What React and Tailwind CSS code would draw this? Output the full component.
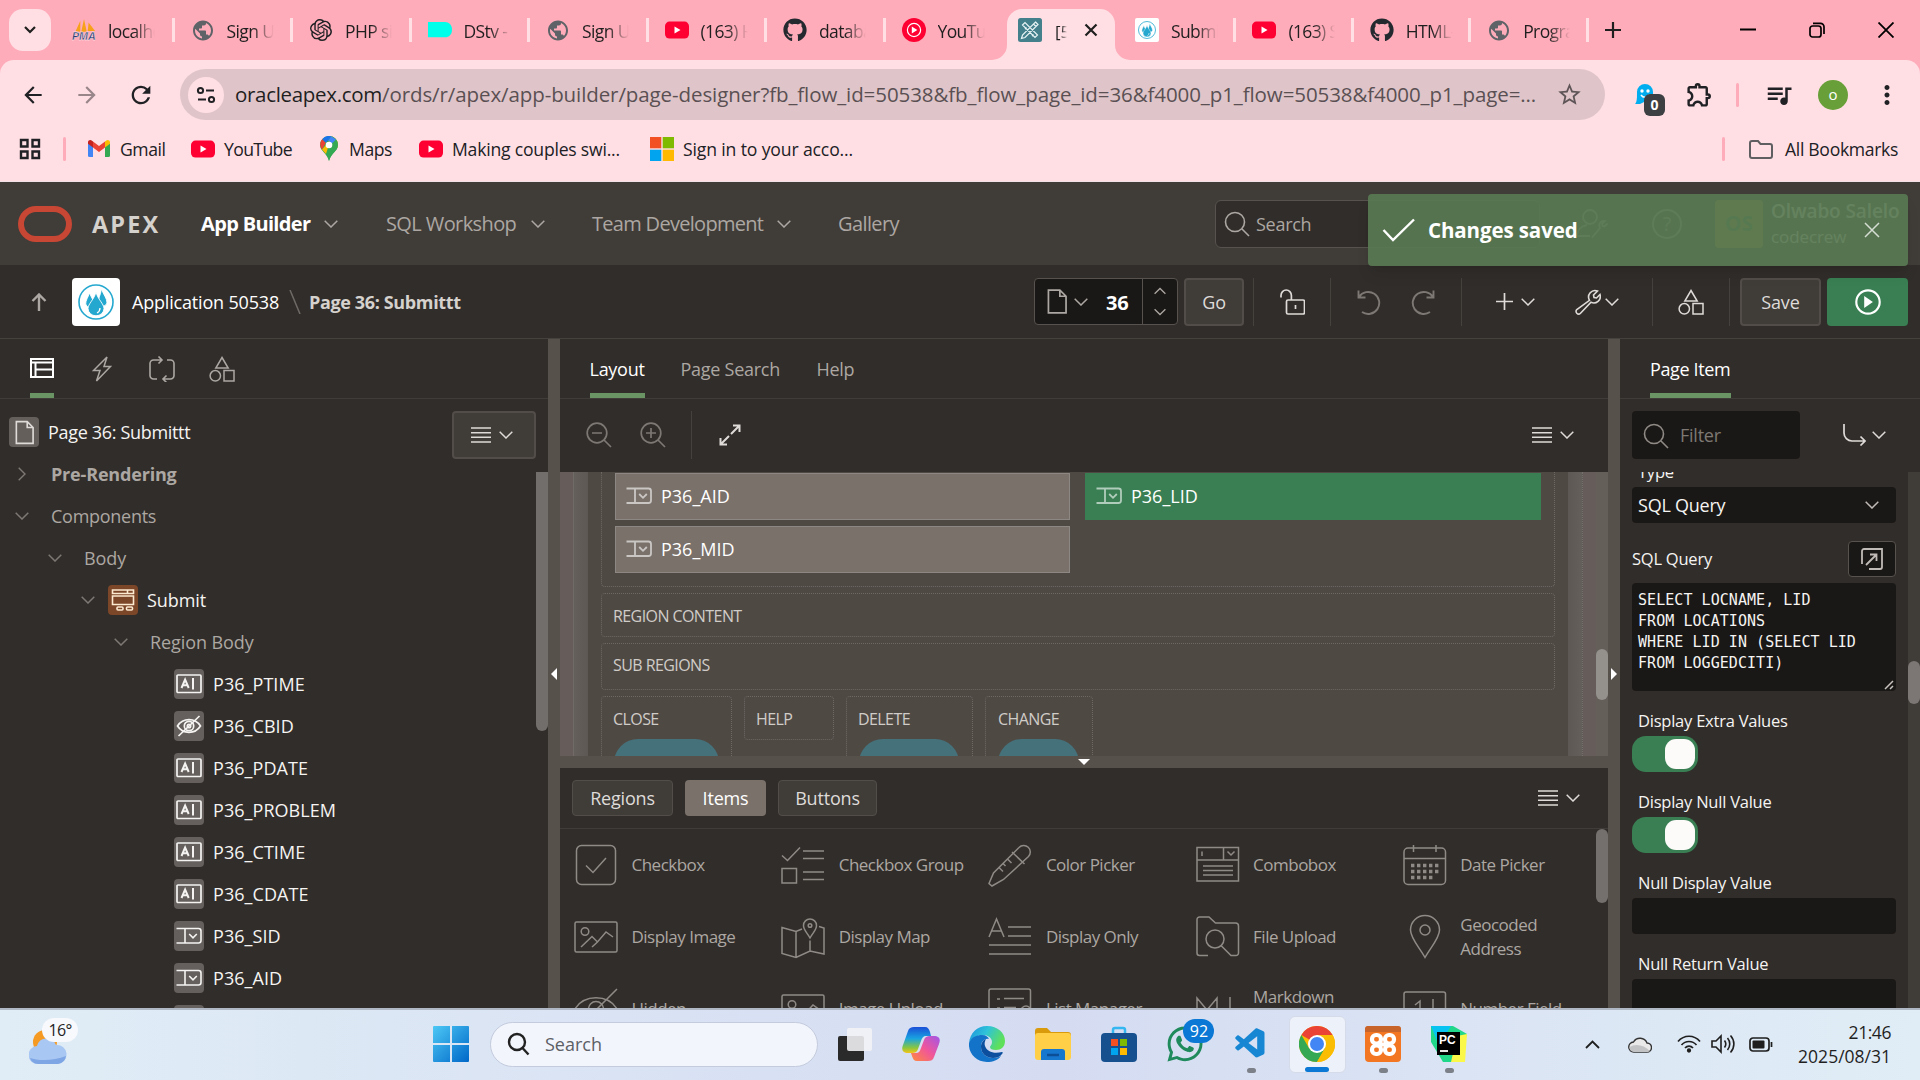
import React from "react";
import { MdPublic, MdArrowBack, MdArrowForward, MdRefresh, MdQueueMusic, MdOutlineExtension, MdStarOutline, MdMoreVert } from "react-icons/md";
import { FaGithub, FaWhatsapp } from "react-icons/fa";
import { SiOpenai } from "react-icons/si";
import { VscVscode } from "react-icons/vsc";

const Svg = ({ w = 24, h = w, vb = "0 0 24 24", sw = 1.5, className = "", children }) => (
  <svg width={w} height={h} viewBox={vb} fill="none" stroke="currentColor" strokeWidth={sw} className={"shrink-0 " + className}>
    {children}
  </svg>
);

/* ---------- shared icons ---------- */
const Chevron = ({ className = "", w = 14 }) => (
  <Svg w={w} h={8} vb="0 0 14 8" className={className}><path d="M.7.7 7 7l6.3-6.3" /></Svg>
);
const ChevronRight = () => <Svg w={8} h={14} vb="0 0 8 14" sw={1.4}><path d="M.7.7 7 7 .7 13.3" /></Svg>;
const Lines = () => (
  <Svg w={20} h={16} vb="0 0 20 16" sw={1.5}><path d="M0 1h20M0 5.7h20M0 10.3h20M0 15h20" /></Svg>
);
const MenuIcon = () => (
  <div className="flex items-center gap-2 text-[#dedbd8]"><Lines /><Chevron /></div>
);
const SearchIcon = ({ className = "" }) => (
  <Svg w={26} h={26} vb="0 0 26 26" sw={1.6} className={className}><circle cx="11" cy="11" r="9.5" /><path d="m18 18 7 7" /></Svg>
);
const Shapes = () => (
  <Svg w={26} h={26} vb="0 0 26 26"><path d="M13 1.5 19.2 12H6.8zM15 14.5h10V25H15z" /><circle cx="6.3" cy="19.8" r="5.2" /></Svg>
);
const Youtube = () => (
  <Svg w={24} h={24} sw={0}><rect y="3.6" width="24" height="17" rx="4.5" fill="#ff0033" /><path d="M9.5 8.4v7.2l6-3.6z" fill="#fff" /></Svg>
);
const Droplets = ({ w }) => (
  <Svg w={w} vb="0 0 48 48" sw={0}>
    <rect width="48" height="48" rx="4" fill="#fff" />
    <circle cx="24" cy="24" r="17" fill="none" stroke="#25a8cf" strokeWidth="1.6" />
    <g fill="#25a8cf" stroke="#fff" strokeWidth=".9">
      <path d="M17.500 15c2 5 4.200 7 4.200 11a4.200 5 0 0 1-8 0c0-4 2.300-6.500 3.800-11zM29.500 11c2 6 5.500 9 5.500 14a5 6 0 0 1-9 0c0-4 2.500-8 3.500-14z" />
      <path d="M24 14c1.500 7 8 12 8 16.500a8 7.300 0 0 1-16 0C16 26 22.500 21 24 14z" />
    </g>
    <path d="M28 30c0 2.500-1 4-3 5" fill="none" stroke="#fff" strokeWidth="1.300" />
  </Svg>
);
const PageIcon = ({ w = 21, h = 26 }) => (
  <Svg w={w} h={h} vb="0 0 21 26" sw={1.8}><path d="M1.500 1h12L20 7.500V25H1.500zM13.500 1v6.500H20" /></Svg>
);
const SelectIcon = ({ sw = 1.6 }) => (
  <Svg w={26} h={18} vb="0 0 26 18" sw={sw}><path d="M.5 1.500h22a2.500 2.500 0 0 1 2.500 2.500v9.500a2.500 2.500 0 0 1-2.500 2.500H.5M9 1.500V16M13.200 7l3.800 3.800L20.800 7" /></Svg>
);
const TextIcon = () => (
  <Svg w={26} h={20} vb="0 0 26 20" sw={1.7}>
    <rect x="1" y="1" width="24" height="17.500" rx="1" />
    <path d="m5.500 14 3.600-8.500 3.600 8.500M6.800 11.300h4.600M17 4v11.500" strokeWidth="2" />
  </Svg>
);
const HiddenIcon = () => (
  <Svg w={26} h={22} vb="0 0 26 22" sw={1.7}>
    <path d="M1.500 11C7 2.500 19 2.500 24.500 11 19 19.500 7 19.500 1.500 11z" /><circle cx="13" cy="11" r="4.700" /><circle cx="13" cy="11" r="1.700" /><path d="m2.500 21 21-20" />
  </Svg>
);
const FormIcon = () => (
  <Svg w={24} h={22} vb="0 0 24 22" sw={1.6}>
    <path d="M1.500 1h21v3.500h-21zM1.500 7h21v8.500h-21zM16.500 1v3" /><rect x="6" y="18" width="6" height="3" rx="1" /><rect x="15.500" y="18" width="6" height="3" rx="1" />
  </Svg>
);

/* ---------- browser ---------- */
const Pma = () => (
  <svg width="26" height="26" viewBox="0 0 26 26">
    <path d="M4 14 9 3v12zM10 15 13 1l3 14zM17 14l1-9 7 9z" fill="#f7a11b" />
    <text x="0" y="24" fontFamily="Liberation Sans" fontSize="11.500" fontWeight="700" fontStyle="italic" fill="#2f3a70" stroke="#fff" strokeWidth=".3">PMA</text>
  </svg>
);
const Dstv = () => <Svg w={24} sw={0}><path d="M0 4h17c4 0 7 3 7 7.700 0 4.600-3 7.600-7 7.600H0z" fill="#00ffea" /></Svg>;
const Ytm = () => (
  <Svg w={24} sw={0}><circle cx="12" cy="12" r="12" fill="#ff0033" /><circle cx="12" cy="12" r="6.600" stroke="#fff" strokeWidth="1.200" /><path d="M9.800 8.500v7l5.500-3.500z" fill="#fff" /></Svg>
);
const ApexFav = () => (
  <Svg w={24} sw={1.200}><rect width="24" height="24" rx="2.500" fill="#44808c" stroke="none" />
    <path d="M4.500 7 7 4.500l12.500 12.500-2.500 2.500zM17.500 4 20 6.500 7 19.500l-3.500 1 1-3.500zM15.500 6l2.500 2.500M7 11l1.500-1.500M14 18l1.500-1.500" stroke="#e8f3f5" />
  </Svg>
);

const tabsLeft = [
  [<Pma />, "localhost"], [<MdPublic size={25} color="#5f6368" />, "Sign Up"], [<SiOpenai size={22} color="#202124" />, "PHP site"],
  [<Dstv />, "DStv - St"], [<MdPublic size={25} color="#5f6368" />, "Sign Up"], [<Youtube />, "(163) How"], [<FaGithub size={24} color="#24292f" />, "database"], [<Ytm />, "YouTube"],
];
const tabsRight = [
  [<Droplets w={24} />, "Submitt"], [<Youtube />, "(163) SQL"], [<FaGithub size={24} color="#24292f" />, "HTML-"], [<MdPublic size={25} color="#5f6368" />, "Program"],
];
const Tab = ({ icon, label, last, w }) => (
  <div className={"flex h-6 items-center pl-4 " + w + (last ? "" : " border-r-[3px] border-[#ffdfe4]")}>
    <div className="flex w-6 shrink-0 justify-center">{icon}</div>
    <div className="ml-3 mt-[3px] w-[47px] overflow-hidden whitespace-nowrap text-[17.5px] tracking-[-0.035em] text-[#1f1f1f] [mask-image:linear-gradient(to_right,black_55%,transparent)]">{label}</div>
  </div>
);

function TabStrip() {
  return (
    <div className="flex h-[60px] shrink-0 items-center bg-[#ffacba]">
      <div className="ml-[9px] flex h-[42px] w-[42px] items-center justify-center rounded-[14px] bg-[#ffdfe4] text-[#1f1f1f]">
        <Svg w={12} h={8} vb="0 0 12 8" sw={2.200}><path d="m1 1 5 5 5-5" /></Svg>
      </div>
      <div className="ml-[5px] flex">
        {tabsLeft.map(([i, l], k) => <Tab key={k} icon={i} label={l} w="w-[118.5px]" last={k === 7} />)}
      </div>
      <div className="flex items-end self-end text-[#ffdfe4]">
        <svg width="15" height="15" className="-ml-[12px]"><path d="M0 15A15 15 0 0 0 15 0V15z" fill="currentColor" /></svg>
        <div className="flex h-[51px] w-[108px] items-center rounded-t-[15px] bg-[#ffdfe4] pb-[9px] pl-[11px]">
          <ApexFav />
          <div className="ml-[13px] mt-[3px] w-3 overflow-hidden text-[17px] text-[#1f1f1f] [mask-image:linear-gradient(to_right,black_55%,transparent)]">[50538]</div>
          <Svg w={14} h={14} vb="0 0 14 14" sw={2.200} className="ml-[17px] text-[#1f1f1f]"><path d="m1.500 1.500 11 11M12.500 1.500l-11 11" /></Svg>
        </div>
        <svg width="15" height="15"><path d="M0 0A15 15 0 0 0 15 15H0z" fill="currentColor" /></svg>
      </div>
      <div className="-ml-[11px] flex">
        {tabsRight.map(([i, l], k) => <Tab key={k} icon={i} label={l} w="w-[117.4px]" />)}
      </div>
      <Svg w={16} sw={2.200} vb="0 0 16 16" className="ml-4 text-[#1f1f1f]"><path d="M8 0v16M0 8h16" /></Svg>
      <div className="ml-auto mr-[26px] flex items-center gap-[53px] text-black">
        <Svg w={16} h={16} vb="0 0 16 16" sw={2}><path d="M0 7.500h16" /></Svg>
        <Svg w={16} h={16} vb="0 0 16 16" sw={1.700}><rect x="1" y="4" width="11" height="11" rx="2.500" /><path d="M4 1.300h7.500a3.500 3.500 0 0 1 3.500 3.500V12" /></Svg>
        <Svg w={16} h={16} vb="0 0 16 16" sw={1.800}><path d="m.5.5 15 15M15.500.5l-15 15" /></Svg>
      </div>
    </div>
  );
}

function Toolbar() {
  return (
    <div className="bg-[#ffacba]">
      <div className="flex h-[69px] items-center rounded-t-[14px] bg-[#ffdfe4] text-[#202124]">
        <MdArrowBack size={26} className="ml-5 shrink-0" />
        <MdArrowForward size={26} className="ml-7 shrink-0 text-[#99868a]" />
        <MdRefresh size={28} className="ml-[27px] shrink-0" />
        <div className="ml-[25px] flex h-[51px] w-[1425px] shrink-0 items-center rounded-full bg-[#dfc5c9] pl-2">
          <div className="flex h-9 w-9 shrink-0 items-center justify-center rounded-full bg-[#ffdfe4]">
            <Svg w={20} h={18} vb="0 0 20 18" sw={2}><circle cx="4.500" cy="4.500" r="2.600" /><path d="M10 4.500h8M2 13.500h8" /><circle cx="15.500" cy="13.500" r="2.600" /></Svg>
          </div>
          <div className="ml-[11px] w-[1305px] overflow-hidden whitespace-nowrap text-[20.5px] tracking-[-0.0045em] text-[#5a5053]">
            <span className="tracking-[-0.015em] text-[#1f1f1f]">oracleapex.com</span>/ords/r/apex/app-builder/page-designer?fb_flow_id=50538&amp;fb_flow_page_id=36&amp;f4000_p1_flow=50538&amp;f4000_p1_page=...
          </div>
          <MdStarOutline size={27} className="ml-4 text-[#5f5558]" />
        </div>
        <div className="relative ml-[26px] h-6 w-6 shrink-0">
          <svg width="20" height="24" viewBox="0 0 20 24" className="ml-1"><path d="M2 9a8 8 0 0 1 16 0v12l-3-2-3 2-3-2-4 2H0c2-2 2-6 2-12z" fill="#00aef0" /><circle cx="7" cy="8" r="1.700" fill="#fff" /><circle cx="13" cy="8" r="1.700" fill="#fff" /><path d="M6 12c2 3 6 3 8 0" stroke="#fff" strokeWidth="1.500" fill="none" /></svg>
          <div className="absolute left-[13px] top-[11px] flex h-[22px] w-[21px] items-center justify-center rounded-md bg-[#3c4043] text-[14px] font-bold text-white">0</div>
        </div>
        <MdOutlineExtension size={29} className="ml-[30px] shrink-0" />
        <div className="ml-[22px] h-6 w-[3px] rounded bg-[#ffacba]" />
        <MdQueueMusic size={30} className="ml-[25px] shrink-0" />
        <div className="ml-6 flex h-[30px] w-[30px] shrink-0 items-center justify-center rounded-full bg-[#689f38] text-[15px] text-white">o</div>
        <MdMoreVert size={30} className="ml-[24px] shrink-0" />
      </div>
    </div>
  );
}

const Gmail = () => (
  <Svg w={22} h={17} vb="0 0 22 17" sw={0}>
    <path d="M0 2v13.500A1.500 1.500 0 0 0 1.500 17H5V6z" fill="#4285f4" /><path d="M22 2v13.500a1.500 1.500 0 0 1-1.500 1.500H17V6z" fill="#34a853" />
    <path d="M5 1.500v6l6 4.500 6-4.500v-6L11 6z" fill="#ea4335" /><path d="M0 2.200C0 .2 2.500-.6 4 .7l1 .8v6L0 3.800z" fill="#c5221f" /><path d="M22 2.200C22 .2 19.500-.6 18 .7l-1 .8v6l5-3.700z" fill="#fbbc04" />
  </Svg>
);
const MapPin = () => (
  <Svg w={18} h={25} vb="0 0 18 25" sw={0}>
    <path d="M9 0a9 9 0 0 1 9 9c0 6-7 8-9 16C7 17 0 15 0 9a9 9 0 0 1 9-9z" fill="#34a853" />
    <path d="M2.200 3.200A9 9 0 0 1 11.500.3L5.800 7z" fill="#1a73e8" /><path d="M2.200 3.200 5.800 7 2 13.500C.3 11.500-1 7 2.200 3.200z" fill="#ea4335" />
    <path d="M2 13.500 12 2l-.5-1.700c3 1 6.500 4 6.500 8.700 0 1-.2 1.800-.5 2.600L6 18z" fill="#fbbc04" /><path d="M11.500.3C15 1.300 18 4.500 18 9c0 6-7 8-9 16-.5-3-1.500-4.500-3-7z" fill="#34a853" />
    <path d="M11.500.3 16 3.400 12 7.500 8 4.400z" fill="#4285f4" /><circle cx="9" cy="9" r="3.300" fill="#fff" />
  </Svg>
);
const MsLogo = () => (
  <Svg w={24} sw={0}><path d="M0 0h11.300v11.300H0z" fill="#f25022" /><path d="M12.700 0H24v11.300H12.700z" fill="#7fba00" /><path d="M0 12.700h11.300V24H0z" fill="#00a4ef" /><path d="M12.700 12.700H24V24H12.700z" fill="#ffb900" /></Svg>
);

function Bookmarks() {
  return (
    <div className="flex h-[52px] shrink-0 items-center whitespace-nowrap bg-[#ffdfe4] pb-[12px] text-[17.6px] tracking-[-0.025em] text-[#202124]">
      <Svg w={22} h={22} vb="0 0 22 22" sw={2.400} className="ml-[19px]"><path d="M2 2h6.500v6.500H2zM13.500 2H20v6.500h-6.500zM2 13.500h6.500V20H2zM13.500 13.500H20V20h-6.500z" /></Svg>
      <div className="ml-[22px] h-6 w-[3px] rounded bg-[#ffacba]" />
      <div className="ml-[22px] flex w-[103px] items-center gap-2.5"><Gmail />Gmail</div>
      <div className="flex w-[129px] items-center gap-[9px]"><Youtube /><span className="tracking-[-0.035em]">YouTube</span></div>
      <div className="flex w-[99px] items-center gap-[11px]"><MapPin />Maps</div>
      <div className="flex w-[231px] items-center gap-[9px]"><Youtube /><span className="tracking-[-0.012em]">Making couples swi...</span></div>
      <div className="flex items-center gap-[9px]"><MsLogo /><span className="tracking-[-0.008em]">Sign in to your acco...</span></div>
      <div className="ml-auto h-6 w-[3px] rounded bg-[#ffacba]" />
      <Svg w={24} h={19} vb="0 0 24 19" sw={2} className="ml-6 text-[#5f5f62]"><path d="M1 3a2 2 0 0 1 2-2h6l2.500 3H21a2 2 0 0 1 2 2v10a2 2 0 0 1-2 2H3a2 2 0 0 1-2-2z" /></Svg>
      <span className="ml-3 w-[135px] tracking-[-0.018em]">All Bookmarks</span>
    </div>
  );
}

/* ---------- APEX header ---------- */
function ApexHeader() {
  return (
    <div className="relative flex h-[84px] shrink-0 items-center border-t border-[#f3e3e6] bg-[#403c38] text-[20px] text-[#aca7a2]">
      <div className="ml-[18px] mt-px h-9 w-[54px] rounded-[18px] border-[6px] border-[#c74634]" />
      <div className="ml-5 mt-0.5 w-[109px] text-[23.5px] font-bold tracking-[0.09em] text-[#d5d1cd]">APEX</div>
      <div className="flex w-[185px] items-center gap-3.5 font-bold tracking-[-0.033em] text-white">App Builder<Chevron className="text-[#aca7a2]" /></div>
      <div className="flex w-[206px] items-center gap-[15px] tracking-[-0.03em]">SQL Workshop<Chevron /></div>
      <div className="flex w-[246px] items-center gap-3.5 tracking-[-0.035em]">Team Development<Chevron /></div>
      <div className="tracking-[-0.03em]">Gallery</div>
      <div className="ml-auto flex items-center">
        <div className="flex h-12 w-[325px] items-center rounded-md border border-[#57524d] bg-[#312d2a] pl-2 pt-px text-[18px] tracking-[-0.015em]"><SearchIcon className="mr-1.5" />Search</div>
        <Svg w={32} h={30} vb="0 0 32 30" sw={1.800} className="ml-[36px]"><circle cx="14" cy="8" r="7" /><path d="M1 27c1-8 5-10 10-11M1 27h13M16 28.500l8-9.500c-2-4 1-8 5-7l-3 3 .5 2 2 .5 3-3" /></Svg>
        <div className="ml-11 flex h-[30px] w-[30px] items-center justify-center rounded-full border-2 border-[#aca7a2] text-[20px]">?</div>
        <div className="ml-[33px] flex h-12 w-12 items-center justify-center rounded bg-[#b8922a] text-[21px] font-bold text-[#3f7a48]">OS</div>
        <div className="ml-2 mr-[21px] w-[128px] whitespace-nowrap text-[19px] font-semibold leading-[25px] tracking-[-0.005em] text-white"><div>Olwabo Salelo</div><div className="text-[17px] font-normal">codecrew</div></div>
      </div>
      <div className="absolute left-[1368px] top-[12px] z-10 flex h-[72px] w-[540px] items-center rounded bg-[#587852]/93 pl-3.5 text-white shadow-lg">
        <Svg w={34} h={24} vb="0 0 34 24" sw={2.400}><path d="m1.500 12 9.500 10L32 1.500" /></Svg>
        <span className="ml-3 text-[20.5px] font-bold tracking-[-0.005em]">Changes saved</span>
        <Svg w={16} h={16} vb="0 0 16 16" sw={1.500} className="ml-auto mr-7 text-[#d5ddd2]"><path d="m1 1 14 14M15 1 1 15" /></Svg>
      </div>
    </div>
  );
}

const VLine = () => <div className="h-12 w-px shrink-0 bg-[#45413d]" />;
function AppBar() {
  return (
    <div className="flex h-[74px] shrink-0 items-center border-b border-[#45413d] bg-[#312d2a] text-[18px] tracking-[-0.01em] text-[#dedbd8]">
      <Svg w={16} h={18} vb="0 0 16 18" sw={2.400} className="ml-[31px] text-[#aca7a2]"><path d="M8 18V2M1.500 8 8 1.500 14.500 8" /></Svg>
      <div className="ml-[25px]"><Droplets w={48} /></div>
      <span className="ml-3 mt-0.5 w-[149px] whitespace-nowrap text-white">Application 50538</span>
      <Svg w={12} h={24} vb="0 0 12 24" sw={1.500} className="ml-2 text-[#6f6a66]"><path d="m1 0 10 24" /></Svg>
      <span className="ml-2 mt-0.5 whitespace-nowrap font-bold tracking-[-0.02em] text-[#d5d1cd]">Page 36: Submittt</span>
      <div className="ml-auto flex h-[47px] w-[144px] items-center rounded border border-[#57524d] bg-[#1a1816]">
        <div className="ml-3 flex items-center gap-[7px] text-[#aca7a2]"><PageIcon w={20} h={25} /><Chevron /></div>
        <div className="ml-[18px] mt-0.5 w-[36px] text-[20px] font-bold text-white">36</div>
        <div className="flex h-full flex-1 flex-col items-center justify-between border-l border-[#57524d] py-2 text-[#aca7a2]">
          <Chevron w={12} className="rotate-180" /><Chevron w={12} />
        </div>
      </div>
      <div className="ml-1.5 mr-[9px] flex h-12 w-[60px] items-center justify-center rounded border-2 border-[#524d48] bg-[#403c38] pt-px">Go</div>
      <VLine />
      <div className="flex w-[76px] justify-center"><Svg w={25} h={26} vb="0 0 25 26" sw={1.700}><rect x="6.500" y="11" width="18" height="14" rx="1.500" /><path d="M1 8.500V6.500a5.200 5.500 0 0 1 10.400 0V11M15.500 16v4" /></Svg></div>
      <VLine />
      <div className="flex w-[130px] justify-center gap-[28px] text-[#7d7873]">
        <Svg w={25} h={26} vb="0 0 25 26" sw={1.900}><path d="M1.500 1.500v7h7M2 8a11 11 0 1 1 3 15" /></Svg>
        <Svg w={25} h={26} vb="0 0 25 26" sw={1.900}><path d="M23.500 1.500v7h-7M23 8a11 11 0 1 0-3 15" /></Svg>
      </div>
      <VLine />
      <div className="flex w-[190px] items-center justify-center gap-[40px]">
        <div className="flex items-center gap-2"><Svg w={17} vb="0 0 17 17" sw={1.700}><path d="M8.500 0v17M0 8.500h17" /></Svg><Chevron /></div>
        <div className="flex items-center gap-1"><Svg w={26} h={26} vb="0 0 26 26" sw={1.600}><path d="M14.500 11.300a6.500 6.500 0 0 1 8-9.300l-4 4 .5 2.500 2.500.5 3.500-3.500a6.500 6.500 0 0 1-9 7.800L5.500 24.200a2.600 2.600 0 0 1-3.700-3.700z" /></Svg><Chevron /></div>
      </div>
      <VLine />
      <div className="flex w-[76px] justify-center"><Shapes /></div>
      <VLine />
      <div className="ml-2.5 flex h-12 w-[81px] items-center justify-center rounded border-2 border-[#524d48] bg-[#403c38] pt-px">Save</div>
      <div className="ml-1.5 mr-3 flex h-12 w-[81px] items-center justify-center rounded bg-[#397f53] text-white">
        <Svg w={26} sw={2}><circle cx="12" cy="12" r="10.800" /><path d="M8.500 6.500v11l8-5.500z" fill="currentColor" stroke="none" /></Svg>
      </div>
    </div>
  );
}

/* ---------- left tree ---------- */
const tree = [
  { pad: "pl-4", label: "Pre-Rendering", closed: true, cls: "font-bold tracking-[-0.01em] text-[#aca7a2]" },
  { pad: "pl-4", label: "Components", cls: "tracking-[-0.015em] text-[#aca7a2]" },
  { pad: "pl-[49px]", label: "Body", cls: "text-[#aca7a2]" },
  { pad: "pl-[82px]", label: "Submit", icon: true, cls: "text-[#f5f4f2]" },
  { pad: "pl-[115px]", label: "Region Body", cls: "text-[#aca7a2]" },
];
const items = [["PTIME", "t"], ["CBID", "h"], ["PDATE", "t"], ["PROBLEM", "t"], ["CTIME", "t"], ["CDATE", "t"], ["SID", "s"], ["AID", "s"], ["MID", "s"]];

function LeftPanel() {
  return (
    <div className="flex w-[548px] shrink-0 flex-col bg-[#312d2a] text-[18px]">
      <div className="flex h-[60px] shrink-0 border-b border-[#403c38] pl-[30px] text-[#aca7a2]">
        <div className="flex h-[59px] w-6 items-center justify-center border-b-[5px] border-[#6a9464] pt-1 text-white">
          <Svg w={24} h={20} vb="0 0 24 20" sw={2}><path d="M1 1h22v18H1zM1 4.500h22M5.500 4.500V19M5.500 11.500H23" /></Svg>
        </div>
        <div className="ml-[36px] flex w-6 items-center justify-center"><Svg w={20} h={26} vb="0 0 20 26"><path d="M15 1 1.500 14.500H8L4.500 25 18.500 10.500H12z" /></Svg></div>
        <div className="ml-[35px] flex w-[26px] items-center justify-center"><Svg w={26} h={26} vb="0 0 26 26" sw={1.600}><path d="M6 4H4.500A3.500 3.500 0 0 0 1 7.500v12A3.500 3.500 0 0 0 4.500 23H8M6 4h7M9.500.5 13 4 9.500 7.500M18 4h3.500A3.500 3.500 0 0 1 25 7.500v12a3.500 3.500 0 0 1-3.500 3.500H14M17.500 19.500 14 23l3.500 3.500" /></Svg></div>
        <div className="ml-[34px] flex items-center"><Shapes /></div>
      </div>
      <div className="flex h-[54px] shrink-0 items-center pl-[9px] pt-3">
        <div className="flex h-[30px] w-[30px] items-center justify-center rounded bg-[#655f5b] text-[#dedbd8]"><PageIcon w={19} h={25} /></div>
        <span className="ml-[9px] mt-px tracking-[-0.018em] text-[#f5f4f2]">Page 36: Submittt</span>
        <div className="ml-auto mr-3 mt-1.5 flex h-12 w-[84px] items-center justify-center rounded border-2 border-[#524d48] bg-[#403c38] pr-1"><MenuIcon /></div>
      </div>
      <div className="relative min-h-0 flex-1 overflow-hidden">
        {tree.map((r) => (
          <div key={r.label} className={"flex h-[42px] items-center tracking-[-0.005em] " + r.pad}>
            <div className="-ml-px mr-px flex w-3.5 shrink-0 justify-center text-[#7d7873]">{r.closed ? <ChevronRight /> : <Chevron />}</div>
            {r.icon ? <div className="mx-[9px] ml-3 flex h-[30px] w-[30px] items-center justify-center rounded bg-[#7c4629] text-[#fbe9d0]"><FormIcon /></div> : <div className="w-[21px]" />}
            <span className={r.cls}>{r.label}</span>
          </div>
        ))}
        {items.map(([n, t]) => (
          <div key={n} className="flex h-[42px] items-center gap-[9px] pl-[174px] tracking-[0.003em] text-[#f5f4f2]">
            <div className="flex h-[30px] w-[30px] items-center justify-center rounded bg-[#65605d]">{t === "t" ? <TextIcon /> : t === "h" ? <HiddenIcon /> : <SelectIcon />}</div>
            <span>{"P36_" + n}</span>
          </div>
        ))}
        <div className="absolute right-0 top-[19px] h-[259px] w-3 rounded-b-full bg-[#726e6b]" />
      </div>
    </div>
  );
}

/* ---------- centre ---------- */
const Slot = ({ children, className = "" }) => (
  <div className={"rounded border border-dotted border-[#6f6965] " + className}>{children}</div>
);
const Field = ({ label, className }) => (
  <div className={"flex h-[47px] items-center gap-[9px] pl-2.5 text-[18px] text-white " + className}>
    <span className="mb-0.5 opacity-60"><SelectIcon sw={1.800} /></span>{label}
  </div>
);
const Pill = ({ w, children }) => (
  <div className={"mt-2 flex h-12 items-start justify-center rounded-full bg-[#45717b] pt-[12px] text-[17px] font-bold leading-6 tracking-[-0.01em] text-white " + w}>{children}</div>
);

function Canvas() {
  return (
    <div className="relative flex h-[284px] shrink-0 overflow-hidden bg-[#655f5a]">
      <div className="w-[14px] border-r border-[#716b68] bg-[#665c59]" />
      <div className="w-[14px] bg-gradient-to-r from-[#655f5b] to-[#5e5854]" />
      <div className="flex w-[980px] flex-col gap-1.5 bg-[#4f4944] px-[13px] text-[16px] tracking-[-0.036em] text-[#d0ccc8]">
        <Slot className="grid h-[115px] shrink-0 grid-cols-[455px_456px] content-start gap-x-[15px] gap-y-1.5 rounded-t-none border-t-0 px-[13px] pt-px tracking-normal">
          <Field label="P36_AID" className="border border-[#8c8782] bg-[#7a716b]" />
          <Field label="P36_LID" className="bg-[#397f53] pl-[11px]" />
          <Field label="P36_MID" className="border border-[#8c8782] bg-[#7a716b]" />
        </Slot>
        <Slot className="flex h-11 shrink-0 items-center pl-[11px] pt-px">REGION CONTENT</Slot>
        <Slot className="flex h-[47px] shrink-0 items-center pb-[3px] pl-[11px]">SUB REGIONS</Slot>
        <div className="flex shrink-0 items-start">
          <Slot className="h-[110px] w-[131px] pt-2.5"><div className="pl-[11px]">CLOSE</div><div className="pl-3"><Pill w="w-[105px]">CANCEL</Pill></div></Slot>
          <Slot className="ml-3 h-11 w-[90px] pl-[11px] pt-2.5">HELP</Slot>
          <Slot className="ml-3 h-[110px] w-[127px] pt-2.5"><div className="pl-[11px]">DELETE</div><div className="pl-3"><Pill w="w-[100px]">DELETE</Pill></div></Slot>
          <Slot className="ml-3 h-[110px] w-[108px] pt-2.5"><div className="pl-3">CHANGE</div><div className="pl-3"><Pill w="w-[81px]">SAVE</Pill></div></Slot>
        </div>
      </div>
      <div className="w-[15px] border-r border-dotted border-[#75706b] bg-gradient-to-r from-[#5e5854] to-[#655f5b]" />
      <div className="w-[13px] bg-[#665c59]" />
      <div className="absolute right-0 top-[177px] h-[51px] w-3 rounded-full bg-[#94908c]" />
    </div>
  );
}

const G = ({ children }) => <Svg w={48} vb="0 0 48 48" sw={1.500} className="text-[#8f8a85]">{children}</Svg>;
const gallery = [
  ["Checkbox", <G><rect x="4.500" y="4.500" width="39" height="39" rx="5" /><path d="m14 24.500 7 7L34 17" /></G>],
  ["Checkbox Group", <G><path d="m3 14.500 5.500 5L21 6.500M24 10h21M24 17.500h21M24 31h21M24 38.500h21M3 27.500h14.500V42H3z" /></G>],
  ["Color Picker", <G><path d="M3 42.500 7.500 32 33 6.500a6.500 6.500 0 0 1 9.500 9L17.500 38.500 6 45zM26 11l12.500 12M21.500 18l4 4M17 22.500l2.500 2.500M13 26.500l4 4" /></G>],
  ["Combobox", <G><path d="M3 6.500h41.500V40H3zM3 19h41.500M29.500 6.500V19M8 10.500v4.500M9 25h30M9 29.500h30M9 34h30M33.500 10.500 37 14l3.500-3.500" /></G>],
  ["Date Picker", <G><rect x="3" y="7" width="41.500" height="36.500" rx="4" /><path d="M3 17.500h41.500M12.500 4v7M35 4v7" /><path d="M10 24.500h30M10 30.500h30M10 36.500h24" strokeWidth="3.400" strokeDasharray="3.400 2.600" /></G>],
  ["Display Image", <G><rect x="3" y="9" width="42" height="30" rx="1.500" /><circle cx="13" cy="18.500" r="3.800" /><path d="m9 34 11-10.500L25.500 29 34 19l7 5M20 34l5.500-5" /></G>],
  ["Display Map", <G><path d="M23 16 17 18.500 3 14.500v26l14 4L31 38l14 3V15l-5-1.500M17 18.500v26M31 27.500V38" /><path d="M31 25c-3-5.500-6.500-8-6.500-12.500a6.500 6.500 0 0 1 13 0C37.500 17 34 19.500 31 25z" /><circle cx="31" cy="12.500" r="1.800" /></G>],
  ["Display Only", <G><path d="M3 24 10.500 6 18 24M5.700 18h9.600M22 14h23M22 23h23M3 32h42M3 41h42" /></G>],
  ["File Upload", <G><path d="M14 42.500H5.500A2.500 2.500 0 0 1 3 40V6.500A2.500 2.500 0 0 1 5.500 4H15l6.500 6h20a3 3 0 0 1 3 3v27a2.500 2.500 0 0 1-2.500 2.500h-5L27 32.500" /><circle cx="21" cy="26" r="9" /></G>],
  ["Geocoded Address", <G><path d="M24 44.500C18 34 9.500 25 9.500 17a14.500 14.500 0 0 1 29 0c0 8-8.500 17-14.500 27.500z" /><circle cx="24" cy="17" r="5" /></G>],
  ["Hidden", <G><path d="M3 24c9-15 33-15 42 0-9 15-33 15-42 0zM5 44 45 4" /><circle cx="24" cy="24" r="7.500" /></G>],
  ["Image Upload", <G><rect x="3" y="10" width="42" height="30" rx="1.500" /><circle cx="13" cy="19.500" r="3.800" /><path d="m9 35 11-10.500L25.500 29 34 20l7 5" /></G>],
  ["List Manager", <G><rect x="3" y="4" width="41.500" height="40" rx="2" /><path d="M11 14h3M18 13.500h20M11 23h3M18 22.500h12" /><circle cx="40" cy="26" r="5" /></G>],
  ["Markdown Editor", <G><path d="M3 36V13l10 12 10-12v23M36 12v22M29 28l7 7 7-7" /></G>],
  ["Number Field", <G><rect x="3" y="7" width="41.500" height="34" rx="2" /><path d="m14 20 5-4v16M32 14v21" /></G>],
];

function CenterPanel() {
  return (
    <div className="flex w-[1048px] shrink-0 flex-col bg-[#312d2a]">
      <div className="flex h-[60px] shrink-0 border-b border-[#403c38] pl-[29.5px] text-[18px] tracking-[-0.015em] text-[#aca7a2]">
        <div className="flex h-[59px] w-[55px] items-center border-b-[5px] border-[#6a9464] pt-1.5 text-white">Layout</div>
        <div className="ml-9 flex w-[100px] items-center whitespace-nowrap pt-[2px]">Page Search</div>
        <div className="ml-[36px] flex items-center pt-[2px]">Help</div>
      </div>
      <div className="flex h-[73px] shrink-0 items-center pb-0.5 pl-[26px] text-[#7d7873]">
        <Svg w={26} h={26} vb="0 0 26 26" sw={1.700}><circle cx="11" cy="11" r="9.800" /><path d="m18 18 7 7M6 11h10" /></Svg>
        <Svg w={26} h={26} vb="0 0 26 26" sw={1.700} className="ml-7"><circle cx="11" cy="11" r="9.800" /><path d="m18 18 7 7M6 11h10M11 6v10" /></Svg>
        <div className="ml-[25px]"><VLine /></div>
        <Svg w={22} h={22} vb="0 0 22 22" sw={2} className="ml-[27px] text-[#dedbd8]"><path d="M14 1.500h6.500V8M20.500 1.500l-8.500 8.500M1.500 14v6.500H8M1.500 20.500 10 12" /></Svg>
        <div className="ml-auto mr-[34px]"><MenuIcon /></div>
      </div>
      <Canvas />
      <div className="flex h-3 shrink-0 items-center justify-center bg-[#57514b] text-white">
        <svg width="12" height="6"><path d="M0 0h12L6 6z" fill="currentColor" /></svg>
      </div>
      <div className="flex h-[61px] shrink-0 items-center border-b border-[#403c38] pl-3 text-[18px] tracking-[-0.01em] text-[#dedbd8]">
        <div className="flex h-9 w-[101px] items-center justify-center rounded border border-[#524d48] bg-[#403c38]">Regions</div>
        <div className="ml-3 flex h-9 w-[81px] items-center justify-center rounded bg-[#7a716b] text-white">Items</div>
        <div className="ml-3 flex h-9 w-[99px] items-center justify-center rounded border border-[#524d48] bg-[#403c38]">Buttons</div>
        <div className="ml-auto mr-[28px]"><MenuIcon /></div>
      </div>
      <div className="flex min-h-0 flex-1 overflow-hidden">
        <div className="grid w-[1036px] auto-rows-[72px] grid-cols-5 text-[17px] leading-6 tracking-[-0.03em] text-[#aca7a2]">
          {gallery.map(([l, i]) => (
            <div key={l} className="flex items-center gap-[11.5px] pl-3">{i}<span className={l.includes("Address") || l.includes("Editor") ? "w-[90px]" : "whitespace-nowrap"}>{l}</span></div>
          ))}
        </div>
        <div className="h-[74px] w-3 rounded-full bg-[#74706d]" />
      </div>
    </div>
  );
}

/* ---------- right ---------- */
const Label = ({ children }) => <div className="mt-[18px] flex h-[27px] items-center pb-0.5 pl-1.5">{children}</div>;
const Toggle = () => (
  <div className="flex h-9 w-[66px] items-center justify-end rounded-[14px] bg-[#397f53] pr-[3px]"><div className="h-[30px] w-[30px] rounded-[11px] bg-[#fcfbfa]" /></div>
);
function RightPanel() {
  return (
    <div className="flex w-[300px] shrink-0 flex-col bg-[#312d2a] text-[16.5px] tracking-[-0.014em] text-[#f5f4f2]">
      <div className="flex h-[60px] shrink-0 border-b border-[#403c38] pl-[30px]">
        <div className="flex h-[59px] w-[81px] items-center whitespace-nowrap border-b-[5px] border-[#6a9464] pt-1.5 text-[18px] tracking-[-0.02em] text-white">Page Item</div>
      </div>
      <div className="flex h-[73px] shrink-0 items-center pb-0.5 pl-3">
        <div className="flex h-12 w-[168px] items-center rounded bg-[#1a1816] pl-[11px] pt-0.5 text-[18px] text-[#7d7873]"><SearchIcon className="mr-[11px] text-[#8f8a85]" />Filter</div>
        <div className="ml-[43px] flex items-center gap-1.5 text-[#dedbd8]">
          <Svg w={23} h={22} vb="0 0 23 22" sw={1.700}><path d="M1 0v9a8 8 0 0 0 8 8h13M17.500 12.500 22 17l-4.500 4.500" /></Svg><Chevron />
        </div>
      </div>
      <div className="flex min-h-0 flex-1 overflow-hidden">
        <div className="ml-3 w-[264px]">
          <div className="-mt-[13px] flex h-[27px] items-center pl-1.5">Type</div>
          <div className="mt-px flex h-9 items-center justify-between rounded bg-[#1a1816] pl-1.5 pr-[17px] text-[18px]">SQL Query<Chevron className="text-[#c0bbb7]" /></div>
          <div className="mt-[18px] flex h-9 items-center justify-between">SQL Query
            <div className="flex h-9 w-12 items-center justify-center rounded border border-[#57524d] bg-[#1a1816] text-[#c0bbb7]">
              <Svg w={22} h={22} vb="0 0 22 22" sw={1.800}><path d="M1 16V3a2 2 0 0 1 2-2h18v18a2 2 0 0 1-2 2H8M5 17 15.500 6.500M9 6.500h6.500V13" /></Svg>
            </div>
          </div>
          <div className="relative mt-1.5 h-[108px] whitespace-pre rounded bg-[#1a1816] px-1.5 pt-[7px] font-['DejaVu_Sans_Mono',monospace] text-[15px] leading-[21px] tracking-[0.05px]">{"SELECT LOCNAME, LID\nFROM LOCATIONS\nWHERE LID IN (SELECT LID\nFROM LOGGEDCITI)"}
            <svg width="11" height="10" className="absolute bottom-px right-px"><path d="m1 9 8-8M6 9l3-3" stroke="#c8c4c0" strokeWidth="1.500" /></svg>
          </div>
          <Label>Display Extra Values</Label><Toggle />
          <Label>Display Null Value</Label><Toggle />
          <Label>Null Display Value</Label><div className="h-9 rounded bg-[#1a1816]" />
          <Label>Null Return Value</Label><div className="h-9 rounded bg-[#1a1816]" />
        </div>
        <div className="ml-3 w-3 bg-[#403c38] pt-[189px]"><div className="h-[43px] rounded-full bg-[#7c7774]" /></div>
      </div>
    </div>
  );
}
const Splitter = ({ flip }) => (
  <div className="flex w-3 shrink-0 items-center justify-center bg-[#57514b] text-white">
    <svg width="6" height="12" className={flip ? "rotate-180" : ""}><path d="M6 0v12L0 6z" fill="currentColor" /></svg>
  </div>
);

/* ---------- taskbar ---------- */
const Win = () => (
  <svg width="36" height="36" viewBox="0 0 36 36"><defs><linearGradient id="win" x1="0" y1="0" x2="1" y2="1"><stop stopColor="#4cc8f5" /><stop offset="1" stopColor="#0067c8" /></linearGradient></defs>
    <path d="M0 1a1 1 0 0 1 1-1h16v17H0zM19 0h16a1 1 0 0 1 1 1v16H19zM0 19h17v17H1a1 1 0 0 1-1-1zM19 19h17v16a1 1 0 0 1-1 1H19z" fill="url(#win)" /></svg>
);
const TaskView = () => <svg width="36" height="36" viewBox="0 0 36 36"><rect x="1" y="10" width="26" height="25" rx="2" fill="#2a2a2a" /><rect x="10" y="2" width="25" height="23" rx="2" fill="#f4f4f6" opacity=".88" /></svg>;
const Copilot = () => (
  <svg width="38" height="36" viewBox="0 0 38 36"><defs>
    <linearGradient id="cpa" x1="0" y1="0" x2="0" y2="1"><stop stopColor="#1b4fd8" /><stop offset=".45" stopColor="#19a5e0" /><stop offset=".8" stopColor="#8bc63f" /><stop offset="1" stopColor="#f5c518" /></linearGradient>
    <linearGradient id="cpb" x1="1" y1="0" x2="0" y2="1"><stop stopColor="#a156e8" /><stop offset=".5" stopColor="#f0569a" /><stop offset="1" stopColor="#ff8a3c" /></linearGradient></defs>
    <path d="M12 1h11c3 0 4 2 5 5l1 4h-5c-3 0-4 2-5 5l-3 8c-1 3-3 4-6 4H6c-5 0-7-3-5-8L6 5c1-3 3-4 6-4z" fill="url(#cpa)" />
    <path d="M26 35H15c-3 0-4-2-5-5l-1-3h5c3 0 4-2 5-5l3-8c1-3 3-4 6-4h4c5 0 7 3 5 8l-5 13c-1 3-3 4-6 4z" fill="url(#cpb)" /></svg>
);
const Edge = () => (
  <svg width="36" height="36" viewBox="0 0 36 36"><defs><linearGradient id="eda" x1="0" y1="0" x2="1" y2=".4"><stop stopColor="#1b8fdc" /><stop offset=".5" stopColor="#2fc3d9" /><stop offset="1" stopColor="#5fe05a" /></linearGradient></defs>
    <path d="M0 17C1 7 8 0 18 0c11 0 18 7 18 15 0 6-4 9-9 9-4 0-6-1-6-3 0-1 2-2 2-5 0-4-4-7-9-7S2 12 0 17z" fill="url(#eda)" />
    <path d="M0 17C2 11 8 9 13 9c4 0 6 2 7 4-5-1-8 3-8 8 0 7 6 11 12 11 3 0 6-1 8-2-3 4-8 6-14 6C7 36-1 27 0 17z" fill="#1373c9" />
    <path d="M12 21c0-4 2-7 5-8-1 2-2 4-1 7 2 6 9 8 17 6 1 0 1 1 0 2-2 3-6 4-9 4-6 0-12-4-12-11z" fill="#0c4f9e" /></svg>
);
const Folder = () => (
  <svg width="36" height="34" viewBox="0 0 36 34"><path d="M0 4a3 3 0 0 1 3-3h9l4 4h17a3 3 0 0 1 3 3v6H0z" fill="#d99a0b" /><rect y="6" width="36" height="27" rx="3" fill="#ffcf48" /><path d="M6 33v-8a3 3 0 0 1 3-3h18a3 3 0 0 1 3 3v8z" fill="#1677cf" /><path d="M12 28h12" stroke="#0d4f97" strokeWidth="2.500" /></svg>
);
const Store = () => (
  <svg width="36" height="36" viewBox="0 0 36 36"><path d="M12 8V4a2 2 0 0 1 2-2h8a2 2 0 0 1 2 2v4" stroke="#35b7f1" strokeWidth="2.500" fill="none" /><rect y="7" width="36" height="29" rx="4" fill="#17508f" /><path d="M10 13h7v7h-7z" fill="#f25022" /><path d="M19 13h7v7h-7z" fill="#7fba00" /><path d="M10 22h7v7h-7z" fill="#00a4ef" /><path d="M19 22h7v7h-7z" fill="#ffb900" /></svg>
);
const Chrome = () => (
  <svg width="36" height="36" viewBox="0 0 36 36"><circle cx="18" cy="18" r="18" fill="#fbbc04" /><path d="M18 18 2.400 9A18 18 0 0 1 33.600 9H18z" fill="#ea4335" /><path d="M2.400 9 10.200 22.500 18 18l7.800 4.500L18 36A18 18 0 0 1 2.400 9z" fill="#34a853" /><path d="M33.600 9A18 18 0 0 1 18 36l7.800-13.500L18 9z" fill="#fbbc04" /><circle cx="18" cy="18" r="9" fill="#fff" /><circle cx="18" cy="18" r="7" fill="#4285f4" /></svg>
);
const Xampp = () => (
  <svg width="36" height="36" viewBox="0 0 36 36"><rect width="36" height="36" rx="4" fill="#f37623" /><path d="M0 3a3 3 0 0 1 3-3h30a3 3 0 0 1 3 3v3H0z" fill="#c8632a" />
    <g stroke="#fff" strokeWidth="4.200" fill="none"><rect x="7" y="9" width="9" height="8.500" rx="4" /><rect x="20" y="9" width="9" height="8.500" rx="4" /><rect x="7" y="19.500" width="9" height="8.500" rx="4" /><rect x="20" y="19.500" width="9" height="8.500" rx="4" /><path d="M15 18.500h6" /></g></svg>
);
const Pycharm = () => (
  <svg width="36" height="36" viewBox="0 0 36 36"><path d="M0 0h22l14 8-8 28H12L0 16z" fill="#21d789" /><path d="M0 0h20L8 20z" fill="#07c3f2" /><path d="m26 10 10-2-2 28H20z" fill="#fcf84a" /><rect x="6" y="6" width="23" height="23" fill="#000" /><text x="8" y="18" fontFamily="Liberation Sans" fontSize="12" fontWeight="700" fill="#fff">PC</text><path d="M9 25h8" stroke="#fff" strokeWidth="1.800" /></svg>
);

const Task = ({ children, dot, active }) => (
  <div className={"relative flex h-[57px] w-[57px] shrink-0 items-center justify-center rounded-md " + (active ? "border border-[#d5dbe8] bg-[#edf1fa]" : "")}>
    {children}
    {dot && <div className="absolute bottom-0 h-[5px] w-[9px] rounded-full bg-[#7c8089]" />}
    {active && <div className="absolute bottom-0 h-[5px] w-6 rounded-full bg-[#0a78d4]" />}
  </div>
);

function Taskbar() {
  return (
    <div className="flex h-[72px] shrink-0 items-center border-t-2 border-[#b0b7c5] bg-gradient-to-r from-[#e0edf6] via-[#d5dcf2] via-55% to-[#e0edf6] pb-0.5 text-[#1f1f1f]">
      <div className="relative ml-[29px] h-12 w-[48px] shrink-0">
        <svg width="38" height="42" viewBox="0 0 38 42" className="mt-1.5"><circle cx="16" cy="16" r="12" fill="#f59a23" /><path d="M9 38a9 9 0 0 1-1-18 10 10 0 0 1 19-1 9.500 9.500 0 0 1 2 19z" fill="#a9c7f3" /><path d="M9 38a9 9 0 0 1-8-6c8 3 24 3 36-2a9.500 9.500 0 0 1-8 8z" fill="#7fa6e4" /></svg>
        <div className="absolute left-[13px] top-[-2px] flex h-6 w-9 items-center justify-center rounded-full bg-[#f7f9fc] text-[16px] tracking-[-0.04em]">16°</div>
      </div>
      <div className="ml-[356px] shrink-0"><Win /></div>
      <div className="ml-[21px] mr-2 flex h-[45px] w-[328px] shrink-0 items-center rounded-full border border-[#c3cbdc] bg-[#f2f5fc] pl-[15px] text-[18px] text-[#5c5f66]">
        <Svg w={24} sw={2.400} className="mr-[15px] text-[#222]"><circle cx="11" cy="10" r="8" /><path d="m16.500 16 6 6.500" /></Svg>Search
      </div>
      <div className="flex gap-[9.1px]">
        <Task><TaskView /></Task>
        <Task><Copilot /></Task>
        <Task><Edge /></Task>
        <Task><Folder /></Task>
        <Task><Store /></Task>
        <Task><FaWhatsapp size={40} color="#1f8a5b" /><div className="absolute left-[27px] top-[3px] flex h-6 w-[31px] items-center justify-center rounded-full bg-[#0a78d4] text-[16px] text-white">92</div></Task>
        <Task dot><VscVscode size={36} color="#1787d4" /></Task>
        <Task active><Chrome /></Task>
        <Task dot><Xampp /></Task>
        <Task dot><Pycharm /></Task>
      </div>
      <div className="ml-auto flex items-center">
        <Svg w={15} h={9} vb="0 0 15 9" sw={1.800}><path d="m1 8 6.500-6.500L14 8" /></Svg>
        <svg width="24" height="17" viewBox="0 0 24 17" className="ml-[28px]"><path d="M6 16a5 5 0 0 1-.5-10 7.500 7.500 0 0 1 13.500 1 4.500 4.500 0 0 1 0 9z" fill="#e9e9ea" stroke="#333" strokeWidth="1.400" /><path d="M6 16a5 5 0 0 1-4.500-5C8 7 16 9 22 15c-1 .8-2 1-3 1z" fill="#c2c3c5" /></svg>
        <Svg w={24} h={18} vb="0 0 24 18" sw={1.700} className="ml-[25px]"><path d="M1 6.500C7-.500 17-.500 23 6.500M4.500 10c4-4.700 11-4.700 15 0M8 13c2.200-2.500 5.800-2.500 8 0" /><circle cx="12" cy="15.500" r="1.300" fill="currentColor" /></Svg>
        <Svg w={24} h={20} vb="0 0 24 20" sw={1.600} className="ml-[10px]"><path d="M1 7h4l5-5v16l-5-5H1zM13.500 6.500c1.500 2 1.500 5 0 7M16.500 4c3 3.500 3 8.500 0 12M19.500 1.500c4.500 5 4.500 12 0 17" /></Svg>
        <Svg w={24} h={15} vb="0 0 24 15" sw={1.700} className="ml-[14px]"><rect x="1" y="1" width="19" height="13" rx="3" /><rect x="3.500" y="3.500" width="12" height="8" rx="1" fill="currentColor" stroke="none" /><path d="M22.500 5v5" /></Svg>
        <div className="-mt-px ml-[20px] mr-[29px] w-[98px] whitespace-nowrap text-right text-[17.5px] leading-6"><div className="tracking-[-0.025em]">21:46</div><div>2025/08/31</div></div>
      </div>
    </div>
  );
}

export default function App() {
  return (
    <div className="flex h-[1080px] w-[1920px] flex-col overflow-hidden font-['Open_Sans','Noto_Sans',sans-serif]">
      <TabStrip />
      <Toolbar />
      <Bookmarks />
      <ApexHeader />
      <AppBar />
      <div className="flex min-h-0 flex-1">
        <LeftPanel />
        <Splitter />
        <CenterPanel />
        <Splitter flip />
        <RightPanel />
      </div>
      <Taskbar />
    </div>
  );
}
